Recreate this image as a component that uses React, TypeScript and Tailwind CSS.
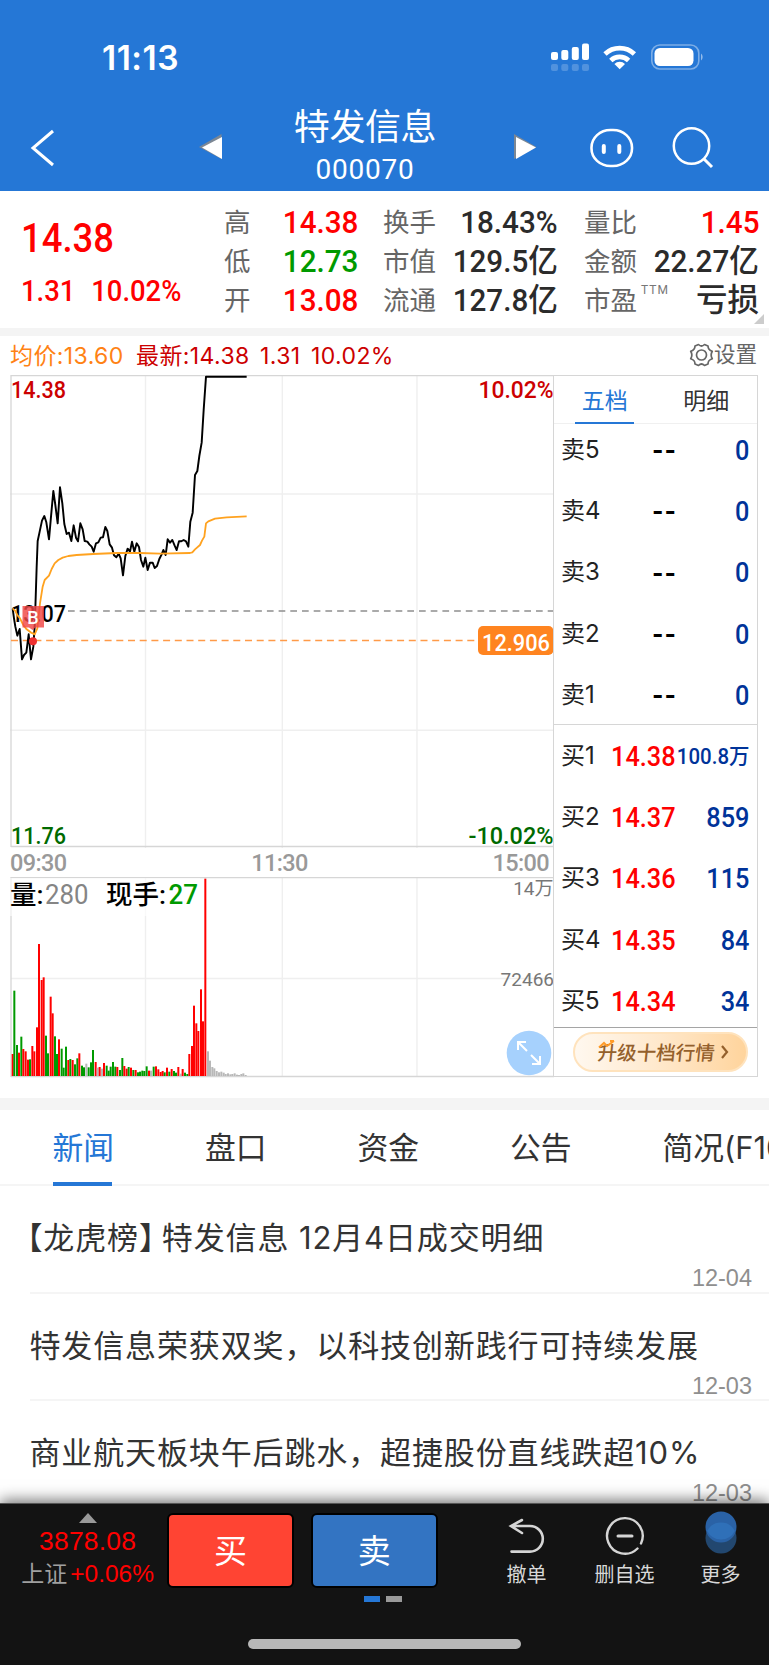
import React, { useState } from 'react';

type Tone = 'r' | 'g' | 'n';

interface Quote {
  label: string;
  value: string;
  tone?: 'up' | 'down';
  note?: string;
}

interface Level {
  label: string;
  price: string;
  qty: string;
}

const quotes: Quote[][] = [
  [
    { label: '高', value: '14.38', tone: 'up' },
    { label: '低', value: '12.73', tone: 'down' },
    { label: '开', value: '13.08', tone: 'up' },
  ],
  [
    { label: '换手', value: '18.43%' },
    { label: '市值', value: '129.5亿' },
    { label: '流通', value: '127.8亿' },
  ],
  [
    { label: '量比', value: '1.45', tone: 'up' },
    { label: '金额', value: '22.27亿' },
    { label: '市盈', value: '亏损', note: 'TTM' },
  ],
];

const quoteColumns = ['w-[134px]', 'w-[175px] ml-[25px]', 'w-[175px] ml-[26px]'];

const sells: Level[] = [5, 4, 3, 2, 1].map((n) => ({ label: `卖${n}`, price: '--', qty: '0' }));

const buys: Level[] = [
  { label: '买1', price: '14.38', qty: '100.8万' },
  { label: '买2', price: '14.37', qty: '859' },
  { label: '买3', price: '14.36', qty: '115' },
  { label: '买4', price: '14.35', qty: '84' },
  { label: '买5', price: '14.34', qty: '34' },
];

const tabs = ['新闻', '盘口', '资金', '公告', '简况(F10)'];

const news = [
  { tag: '【龙虎榜】', title: '特发信息 12月4日成交明细', date: '12-04' },
  { title: '特发信息荣获双奖，以科技创新践行可持续发展', date: '12-03' },
  { title: '商业航天板块午后跳水，超捷股份直线跌超10%', date: '12-03' },
];

// Chart data, three units to one pixel
const pricePoints =
  '38,716 42,745 46,770 52,797 59,777 66,868 72,855 79,848 86,793 93,868 100,830 104,770 106,716 110,590 113,513 119,485 126,452 133,438 139,457 147,508 153,440 160,363 166,405 173,460 180,352 187,400 193,462 200,492 207,488 214,513 221,466 228,503 234,514 241,460 248,478 254,513 262,515 268,523 275,530 281,545 288,520 295,517 302,503 309,502 316,471 322,483 329,523 336,533 342,556 349,562 356,551 362,565 369,616 376,558 383,536 390,545 396,515 403,545 410,520 417,531 423,570 430,590 436,563 443,600 450,578 458,578 464,594 471,588 478,567 485,553 490,540 497,555 503,508 510,518 517,510 524,527 530,540 537,514 543,514 551,510 558,514 565,530 571,455 578,428 585,315 592,303 598,258 605,218 611,120 618,20 740,20';

const averagePoints =
  '38,716 45,722 52,735 60,745 70,765 80,778 92,787 104,793 112,775 120,700 128,650 134,630 147,617 155,597 164,580 175,570 188,563 205,558 230,555 280,552 350,549 420,549 480,551 570,549 577,547 585,538 600,525 606,512 613,500 618,460 625,454 645,446 680,442 740,439';

const volumes: [number, number, Tone][] = [
  [38, 762, 'r'], [43, 572, 'g'], [51, 735, 'g'], [57, 758, 'r'], [64, 710, 'g'], [70, 747, 'r'], [77, 754, 'r'], [84, 779, 'r'],
  [90, 778, 'g'], [97, 738, 'r'], [103, 754, 'r'], [111, 682, 'r'], [117, 432, 'r'], [125, 540, 'r'], [131, 532, 'r'], [138, 707, 'g'],
  [144, 760, 'g'], [152, 590, 'r'], [158, 640, 'r'], [165, 709, 'g'], [171, 762, 'g'], [177, 718, 'r'], [185, 746, 'g'], [191, 803, 'g'],
  [198, 740, 'g'], [205, 780, 'r'], [211, 777, 'g'], [218, 780, 'r'], [225, 793, 'g'], [232, 775, 'g'], [238, 760, 'r'], [246, 797, 'g'],
  [252, 802, 'g'], [259, 791, 'n'], [266, 802, 'g'], [273, 787, 'g'], [279, 750, 'g'], [287, 786, 'r'], [293, 803, 'n'], [299, 801, 'r'],
  [306, 806, 'n'], [312, 789, 'r'], [320, 797, 'g'], [326, 812, 'g'], [332, 800, 'g'], [339, 786, 'g'], [346, 800, 'g'], [352, 801, 'r'],
  [360, 810, 'g'], [367, 774, 'g'], [373, 798, 'r'], [380, 806, 'r'], [386, 801, 'g'], [393, 803, 'r'], [400, 810, 'g'], [407, 810, 'r'],
  [414, 817, 'g'], [420, 815, 'g'], [427, 812, 'g'], [433, 813, 'g'], [440, 799, 'g'], [447, 812, 'r'], [453, 812, 'n'], [461, 800, 'g'],
  [468, 799, 'r'], [475, 808, 'r'], [482, 816, 'r'], [488, 813, 'r'], [494, 817, 'g'], [501, 803, 'r'], [508, 815, 'g'], [515, 807, 'r'],
  [522, 813, 'g'], [528, 818, 'g'], [535, 801, 'r'], [542, 821, 'n'], [548, 807, 'r'], [555, 818, 'g'], [562, 822, 'g'], [568, 762, 'r'],
  [576, 738, 'r'], [582, 617, 'r'], [589, 670, 'r'], [595, 693, 'r'], [603, 568, 'r'], [609, 664, 'r'], [616, 236, 'r'], [624, 754, 'n'],
  [630, 782, 'n'], [637, 801, 'n'], [643, 805, 'n'], [650, 813, 'n'], [657, 817, 'n'], [664, 815, 'n'], [671, 818, 'n'], [677, 822, 'n'],
  [684, 820, 'n'], [691, 823, 'n'], [697, 822, 'n'], [704, 820, 'n'], [711, 824, 'n'], [717, 825, 'n'], [724, 822, 'n'], [730, 820, 'n'],
  [737, 825, 'n'],
];

const volumeColors: Record<Tone, string> = { r: '#ff0000', g: '#009a00', n: '#b8b8b8' };

const StatusBar = () => (
  <div className="h-[105px] pt-[38px] pl-[102px] pr-[64px] flex items-start justify-between">
    <span className="font-['Inter'] font-semibold text-[33.5px] leading-[40px] tracking-[0.5px]">11:13</span>
    <svg width="154" height="39" viewBox="551 38 154 39" fill="#fff">
      <rect x="551" y="52" width="7" height="8" rx="2" />
      <rect x="561.3" y="50" width="7" height="10" rx="2" />
      <rect x="571.8" y="47" width="7" height="13" rx="2" />
      <rect x="582" y="43.5" width="7" height="16.5" rx="2" />
      <g opacity=".2">
        <rect x="551" y="64" width="7" height="7" rx="2" />
        <rect x="561.3" y="64" width="7" height="7" rx="2" />
        <rect x="571.8" y="64" width="7" height="7" rx="2" />
        <rect x="582" y="64" width="7" height="7" rx="2" />
      </g>
      <g fill="none" stroke="#fff" strokeWidth="4.8">
        <path d="M605 54 A21.5 21.5 0 0 1 634.4 54" />
        <path d="M610.8 60.4 A13 13 0 0 1 628.6 60.4" />
      </g>
      <path d="M619.7 69.2 L614.4 63.9 A7.6 7.6 0 0 1 625 63.9 Z" />
      <rect x="651.8" y="45" width="47" height="24" rx="8" fill="none" stroke="#fff" strokeOpacity=".4" strokeWidth="1.6" />
      <rect x="654.5" y="48" width="39" height="18" rx="5.5" />
      <path d="M701 53.5 A4.5 4.5 0 0 1 701 60.5 Z" opacity=".5" />
    </svg>
  </div>
);

const TitleBar = () => (
  <div className="h-[86px] flex">
    <svg width="240" height="86" viewBox="0 105 240 86" fill="none">
      <path d="M53 131 L33 148 L53 165" stroke="#fff" strokeWidth="3" />
      <path d="M221.5 134 V159 L199 147 Z" fill="#7c8794" />
      <path d="M222 137 V159 L202 147.5 Z" fill="#fff" />
    </svg>
    <div className="w-[250px] flex flex-col items-center">
      <h1 className="text-[36px] leading-[39px] tracking-[-0.4px]">特发信息</h1>
      <p className="font-['Roboto'] text-[28px] leading-[34px] mt-[9px] tracking-[0.8px]">000070</p>
    </div>
    <svg width="279" height="86" viewBox="490 105 279 86" fill="none">
      <path d="M514 134 V159 L536.5 147 Z" fill="#7c8794" />
      <path d="M516 137 V159 L536 147.5 Z" fill="#fff" />
      <g stroke="#fff">
        <rect x="591.5" y="130" width="40.5" height="36" rx="19" ry="17.5" strokeWidth="2.6" />
        <path d="M603.8 146 V152 M619.3 146 V152" strokeWidth="4" strokeLinecap="round" />
        <circle cx="691.5" cy="146" r="17.7" strokeWidth="2.5" />
        <path d="M703.5 158.5 L712 167" strokeWidth="3" />
      </g>
    </svg>
  </div>
);

const QuotePanel = () => (
  <section className="relative h-[137px] bg-white pt-[11.5px] flex font-['Roboto','Noto_Sans_CJK_SC',sans-serif]">
    <div className="w-[224px] pl-[20.5px] text-[#ff0000] font-medium whitespace-nowrap">
      <div className="text-[40px] leading-[48px] mt-[12px] origin-left scale-x-[0.91]">14.38</div>
      <div className="text-[29.5px] leading-[34px] mt-[11px] origin-left scale-x-[0.93]">
        1.31<span className="ml-[17px]">10.02%</span>
      </div>
    </div>
    {quotes.map((column, i) => (
      <div key={column[0].label} className={quoteColumns[i]}>
        {column.map((q) => (
          <div key={q.label} className="h-[39px] flex justify-between items-center whitespace-nowrap">
            <span className="text-[26.5px] leading-[39px] text-[#666]">
              {q.label}
              {q.note && <sup className="text-[12px] leading-none text-[#777] tracking-[1px] ml-[4px] -top-[16px] align-baseline relative">{q.note}</sup>}
            </span>
            <span
              className={`text-[31.5px] leading-[39px] font-medium origin-right ${q.value === '亏损' ? '' : 'scale-x-[0.94]'} ${
                q.tone === 'up' ? 'text-[#ff0000]' : q.tone === 'down' ? 'text-[#009a00]' : 'text-[#2b2b2b]'
              }`}
            >
              {q.value}
            </span>
          </div>
        ))}
      </div>
    ))}
    <svg className="absolute right-[5px] bottom-[4px]" width="10" height="10">
      <path d="M10 0 V10 H0 Z" fill="#ccc" />
    </svg>
  </section>
);

const InfoLine = () => (
  <div className="h-[39px] pt-[1px] pl-[10px] pr-[12px] flex items-center justify-between font-['Inter','Noto_Sans_CJK_SC',sans-serif] text-[23px] whitespace-nowrap">
    <div className="flex text-[#cc0000] tracking-[0.4px]">
      <span className="text-[#ff8214] w-[126px]">均价:13.60</span>
      <span className="w-[124px]">最新:14.38</span>
      <span className="w-[51px]">1.31</span>
      <span>10.02%</span>
    </div>
    <div className="flex items-center text-[21.5px] text-[#666] pb-[3px]">
      <svg width="25" height="24" viewBox="-12.5 -12 25 24" fill="none" stroke="#666" strokeWidth="1.7" strokeLinejoin="round">
        <path d="M-3 -10.5 Q0 -7.5 3 -10.5 L6.5 -9 Q6.5 -5 10.8 -3.8 Q8.5 0 10.8 3.8 Q6.5 5 6.5 9 L3 10.5 Q0 7.5 -3 10.5 L-6.5 9 Q-6.5 5 -10.8 3.8 Q-8.5 0 -10.8 -3.8 Q-6.5 -5 -6.5 -9 Z" />
        <circle r="5" />
      </svg>
      设置
    </div>
  </div>
);

const PriceChart = () => (
  <svg className="block" width="544" height="473" viewBox="10 375 544 473" fontFamily="Roboto, sans-serif" fontSize="23" fontWeight="500">
    <path d="M10 494 H553 M10 730.3 H553 M145.5 375 V848 M282.3 375 V848 M417 375 V848" stroke="#efefef" strokeWidth="1.4" />
    <path d="M11 847 V375.5 H553.5 M11 846.5 H553" stroke="#d6d6d6" strokeWidth="1.3" fill="none" />
    <path d="M68 611 H553" stroke="#8f8f8f" strokeWidth="1.7" strokeDasharray="6.7 5" />
    <path d="M11 640.5 H478" stroke="#ff9a48" strokeWidth="1.3" strokeDasharray="7 4.7" />
    <text x="11" y="398" fill="#cc0000" textLength="55" lengthAdjust="spacingAndGlyphs">14.38</text>
    <text x="553.5" y="398" fill="#cc0000" textLength="75" lengthAdjust="spacingAndGlyphs" textAnchor="end">10.02%</text>
    <text x="11" y="621.5" fill="#000" textLength="55" lengthAdjust="spacingAndGlyphs">13.07</text>
    <text x="11" y="844" fill="#006a00" textLength="55" lengthAdjust="spacingAndGlyphs">11.76</text>
    <text x="553.5" y="844" fill="#006a00" textLength="85" lengthAdjust="spacingAndGlyphs" textAnchor="end">-10.02%</text>
    <g transform="translate(0 370) scale(.33333)" fill="none" strokeLinejoin="round">
      <polyline points={pricePoints} stroke="#000" strokeWidth="5.8" />
      <polyline points={averagePoints} stroke="#ffa21f" strokeWidth="5.4" />
    </g>
    <path d="M22.5 606 H44 V627.5 H35.5 L32.5 630 L29 627.5 H22.5 Z" fill="#f04545" fillOpacity=".82" />
    <text x="33" y="623.5" fill="#fff" fontSize="18" textAnchor="middle">B</text>
    <circle cx="33" cy="641.3" r="4" fill="#ee3030" />
    <rect x="478" y="626" width="75.5" height="29" rx="5" fill="#ff8420" />
    <text x="482" y="650.5" fill="#fff" textLength="68" lengthAdjust="spacingAndGlyphs">12.906</text>
  </svg>
);

const VolumeChart = () => (
  <svg className="block" width="544" height="201" viewBox="10 877 544 201" fontFamily="Roboto, 'Noto Sans CJK SC', sans-serif" fontWeight="500">
    <path d="M11 978.5 H553 M145.5 878 V1076 M282.3 878 V1076 M417 878 V1076" stroke="#efefef" strokeWidth="1.4" />
    <path d="M11 1077 V877.5 H553 M11 1076.5 H558" stroke="#d6d6d6" strokeWidth="1.3" fill="none" />
    <rect x="10" y="878" width="190" height="38" fill="#fff" fillOpacity=".6" />
    <g transform="translate(0 800) scale(.33333)">
      {volumes.map(([x, top, tone]) => (
        <rect key={x} x={x - 3} y={top} width="6" height={828 - top} fill={volumeColors[tone]} />
      ))}
    </g>
    <text x="10" y="904" fontSize="26.5">量:</text>
    <text x="45" y="904" fontSize="27" fill="#858585" fontWeight="400" textLength="43.5" lengthAdjust="spacingAndGlyphs">280</text>
    <text x="106" y="904" fontSize="26.5">现手:</text>
    <text x="168.5" y="904" fontSize="27" fill="#009a00" textLength="29.5" lengthAdjust="spacingAndGlyphs">27</text>
    <text x="553.5" y="895" fontSize="19" fontWeight="400" fill="#777" textAnchor="end">14万</text>
    <text x="554" y="986" fontSize="19" fontWeight="400" fill="#777" textAnchor="end">72466</text>
    <circle cx="529" cy="1053" r="22.3" fill="#a6d1fd" />
    <path d="M527 1051 L518.5 1042.5 M518 1050 V1042 H526 M531 1055 L539.5 1063.5 M540 1056 V1064 H532" stroke="#fff" strokeWidth="2" fill="none" />
  </svg>
);

const LevelRow = ({ level, side }: { level: Level; side: 'sell' | 'buy' }) => (
  <div className="h-[61.3px] flex items-center pl-[7px] pr-[8px] whitespace-nowrap">
    <span className="w-[49.5px] shrink-0 text-[24px] leading-none text-[#222] font-['Inter','Noto_Sans_CJK_SC',sans-serif]">{level.label}</span>
    {side === 'sell' ? (
      <span className="w-[63px] shrink-0 pl-[42px] mt-[2px] text-[31px] leading-none font-medium text-black tracking-[2px]">{level.price}</span>
    ) : (
      <span className="w-[54px] shrink-0 mt-[2px] text-[27.5px] leading-none font-medium text-[#ff0000]">
        <span className="inline-block origin-left scale-x-[0.92]">{level.price}</span>
      </span>
    )}
    <span
      className={`flex-1 flex justify-end mt-[2px] leading-none font-medium text-[#003399] origin-right ${
        level.qty.length > 4 ? 'text-[22px] scale-x-[0.93]' : 'text-[27.5px] scale-x-[0.92]'
      }`}
    >
      {level.qty}
    </span>
  </div>
);

const OrderBook = () => {
  const [mode, setMode] = useState<'五档' | '明细'>('五档');

  return (
    <aside className="w-[205px] h-[702px] -ml-px border border-[#d6d6d6] font-['Roboto','Noto_Sans_CJK_SC',sans-serif]">
      <div className="h-[48px] flex border-b border-[#f0f0f0]">
        {(['五档', '明细'] as const).map((name) => (
          <button
            key={name}
            onClick={() => setMode(name)}
            className={`w-[102px] h-[48px] flex justify-center text-[23px] leading-[51px] ${mode === name ? 'text-[#2577d6]' : 'text-[#333]'}`}
          >
            <span className={`w-[59px] h-[48px] ${mode === name ? 'border-b-2 border-[#2577d6]' : ''}`}>{name}</span>
          </button>
        ))}
      </div>
      <div className="h-[300px] -mt-[5px] border-b border-[#d6d6d6] box-content pb-[5px]">
        {sells.map((level) => (
          <LevelRow key={level.label} level={level} side="sell" />
        ))}
      </div>
      <div className="h-[302px] border-b border-[#a5a5a5] box-content">
        {buys.map((level) => (
          <LevelRow key={level.label} level={level} side="buy" />
        ))}
      </div>
      <button className="relative ml-[19px] mt-[4px] w-[175px] h-[40px] rounded-full border-2 border-[#ffe3bd] bg-linear-to-r from-[#fff8ef] via-[#ffe8cb] to-[#ffd49c] pl-[23px] flex items-center text-[19.5px] font-medium text-[#94602c] font-['Noto_Sans_CJK_SC',sans-serif]">
        <span className="-skew-x-6">升级十档行情</span>
        <svg width="9" height="14" viewBox="0 0 9 14" className="ml-[5px]">
          <path d="M2 1 L7 7 L2 13" fill="none" stroke="#94602c" strokeWidth="2.2" />
        </svg>
        <svg width="18" height="9" viewBox="0 0 18 9" className="absolute left-[23px] top-[6px]">
          <path d="M1 7.5 L6 3 L9 6 L16 1 M12 1 H16" fill="none" stroke="#ff9b28" strokeWidth="2" />
        </svg>
      </button>
    </aside>
  );
};

const NewsSection = () => {
  const [active, setActive] = useState('新闻');

  return (
    <section className="h-[393px] overflow-hidden bg-white text-[#333] font-['Inter','Noto_Sans_CJK_SC',sans-serif]">
      <nav className="h-[76px] flex border-b-2 border-[#f5f5f5] pl-[52.5px] text-[30.8px] whitespace-nowrap">
        {tabs.map((tab) => (
          <button key={tab} onClick={() => setActive(tab)} className={`w-[152.5px] shrink-0 text-left ${active === tab ? 'text-[#2577d6]' : ''}`}>
            <span className={`block h-[76px] leading-[75px] ${active === tab ? 'w-[59px] border-b-4 border-[#2577d6]' : ''}`}>{tab}</span>
          </button>
        ))}
      </nav>
      <ul className="pl-[30px]">
        {news.map((item) => (
          <li key={item.title} className="h-[107.7px] border-b-2 border-[#f5f5f5] pt-[30px] pr-[17px] whitespace-nowrap">
            <p className="text-[31px] leading-[44px] tracking-[0.87px] -ml-[0.5px]">
              {item.tag && <span className="-ml-[18px] mr-[-9px]">{item.tag}</span>}
              {item.title}
            </p>
            <p className="text-right text-[23.5px] leading-[28px] mt-[4px] text-[#8f8f8f] font-['Liberation_Sans']">{item.date}</p>
          </li>
        ))}
      </ul>
    </section>
  );
};

const BottomBar = () => (
  <footer className="relative h-[162px] bg-[#131313] border-t border-[#555] shadow-[0_-3px_14px_rgba(0,0,0,0.55)] text-[#d8d8d8] font-['Noto_Sans_CJK_SC',sans-serif]">
    <div className="flex h-[90px]">
      <div className="w-[168px] pl-[8px] flex flex-col items-center text-[#ff0000] font-['Liberation_Sans','Noto_Sans_CJK_SC',sans-serif] whitespace-nowrap">
        <svg width="18" height="10" className="mt-[9px] shrink-0">
          <path d="M9 0 L18 10 H0 Z" fill="#999" />
        </svg>
        <div className="text-[26.5px] leading-[32px] mt-[2px] tracking-[0.2px]">3878.08</div>
        <div className="text-[24.5px] leading-[30px] mt-[2px]">
          <span className="text-[23px] text-[#a0a0a0] mr-[3px]">上证</span>+0.06%
        </div>
      </div>
      <button className="mt-[9px] w-[127px] h-[75px] border-2 border-black rounded-md bg-[#ff4433] text-white text-[33px] leading-[67px] pb-[3px]">买</button>
      <button className="mt-[9px] ml-[17px] w-[128px] h-[75px] border-2 border-black rounded-md bg-[#3374c2] text-white text-[33px] leading-[67px] pb-[3px]">卖</button>
      <div className="ml-[38px] flex text-[20px] leading-[28px] text-center whitespace-nowrap">
        <div className="w-[101px]">
          <svg width="38" height="38" viewBox="0 0 38 38" className="mx-auto mt-[13px] mb-[5px]" fill="none" stroke="#d5d5d5" strokeWidth="2.6" strokeLinecap="round">
            <path d="M14 3 L3 9 L14 16 M4 9 H22 A12.8 12.8 0 0 1 22 34.6 H3.5" />
          </svg>
          撤单
        </div>
        <div className="w-[95px]">
          <svg width="40" height="40" viewBox="-20 -20 40 40" className="mx-auto mt-[12px] mb-[4px]" fill="none" stroke="#d5d5d5" strokeWidth="2.4" strokeLinecap="round">
            <path d="M16 7.5 A17.8 17.8 0 1 0 12.5 12.5" />
            <path d="M-7 0 H7" strokeWidth="3" />
          </svg>
          删自选
        </div>
        <div className="w-[97px]">
          <svg width="32" height="44" viewBox="0 0 32 44" className="mx-auto mt-[7px] mb-[5px]">
            <circle cx="16" cy="27" r="15.5" fill="#22476f" />
            <circle cx="16" cy="16" r="15.5" fill="#2a62a6" />
            <path d="M2.2 20 A15.5 15.5 0 0 1 29.8 20 A15.5 15.5 0 0 1 2.2 20 Z" fill="#2f70b8" />
          </svg>
          更多
        </div>
      </div>
    </div>
    <div className="flex justify-center gap-[6px] pt-[2px] pr-[3px]">
      <span className="w-[16px] h-[6px] bg-[#2577d6]" />
      <span className="w-[16px] h-[6px] bg-[#999]" />
    </div>
    <div className="mx-auto mt-[37px] w-[273px] h-[10px] rounded-full bg-[#b8b8b8]" />
  </footer>
);

const App: React.FC = () => {
  return (
    <div className="w-[769px] h-[1665px] overflow-hidden bg-white font-['Noto_Sans_CJK_SC',sans-serif]">
      <header className="h-[191px] bg-[#2577d6] text-white">
        <StatusBar />
        <TitleBar />
      </header>
      <QuotePanel />
      <div className="h-[8px] bg-[#f4f4f4]" />
      <InfoLine />
      <main className="pl-[10px] h-[723px] flex">
        <div className="w-[544px]">
          <PriceChart />
          <div className="h-[29px] flex justify-between pr-[5px] font-['Roboto'] font-medium text-[23.5px] leading-[30px] tracking-[-0.6px] text-[#999]">
            <span>09:30</span>
            <span>11:30</span>
            <span>15:00</span>
          </div>
          <VolumeChart />
        </div>
        <OrderBook />
      </main>
      <div className="h-[12px] bg-[#f4f4f4]" />
      <NewsSection />
      <BottomBar />
    </div>
  );
};

export default App;
